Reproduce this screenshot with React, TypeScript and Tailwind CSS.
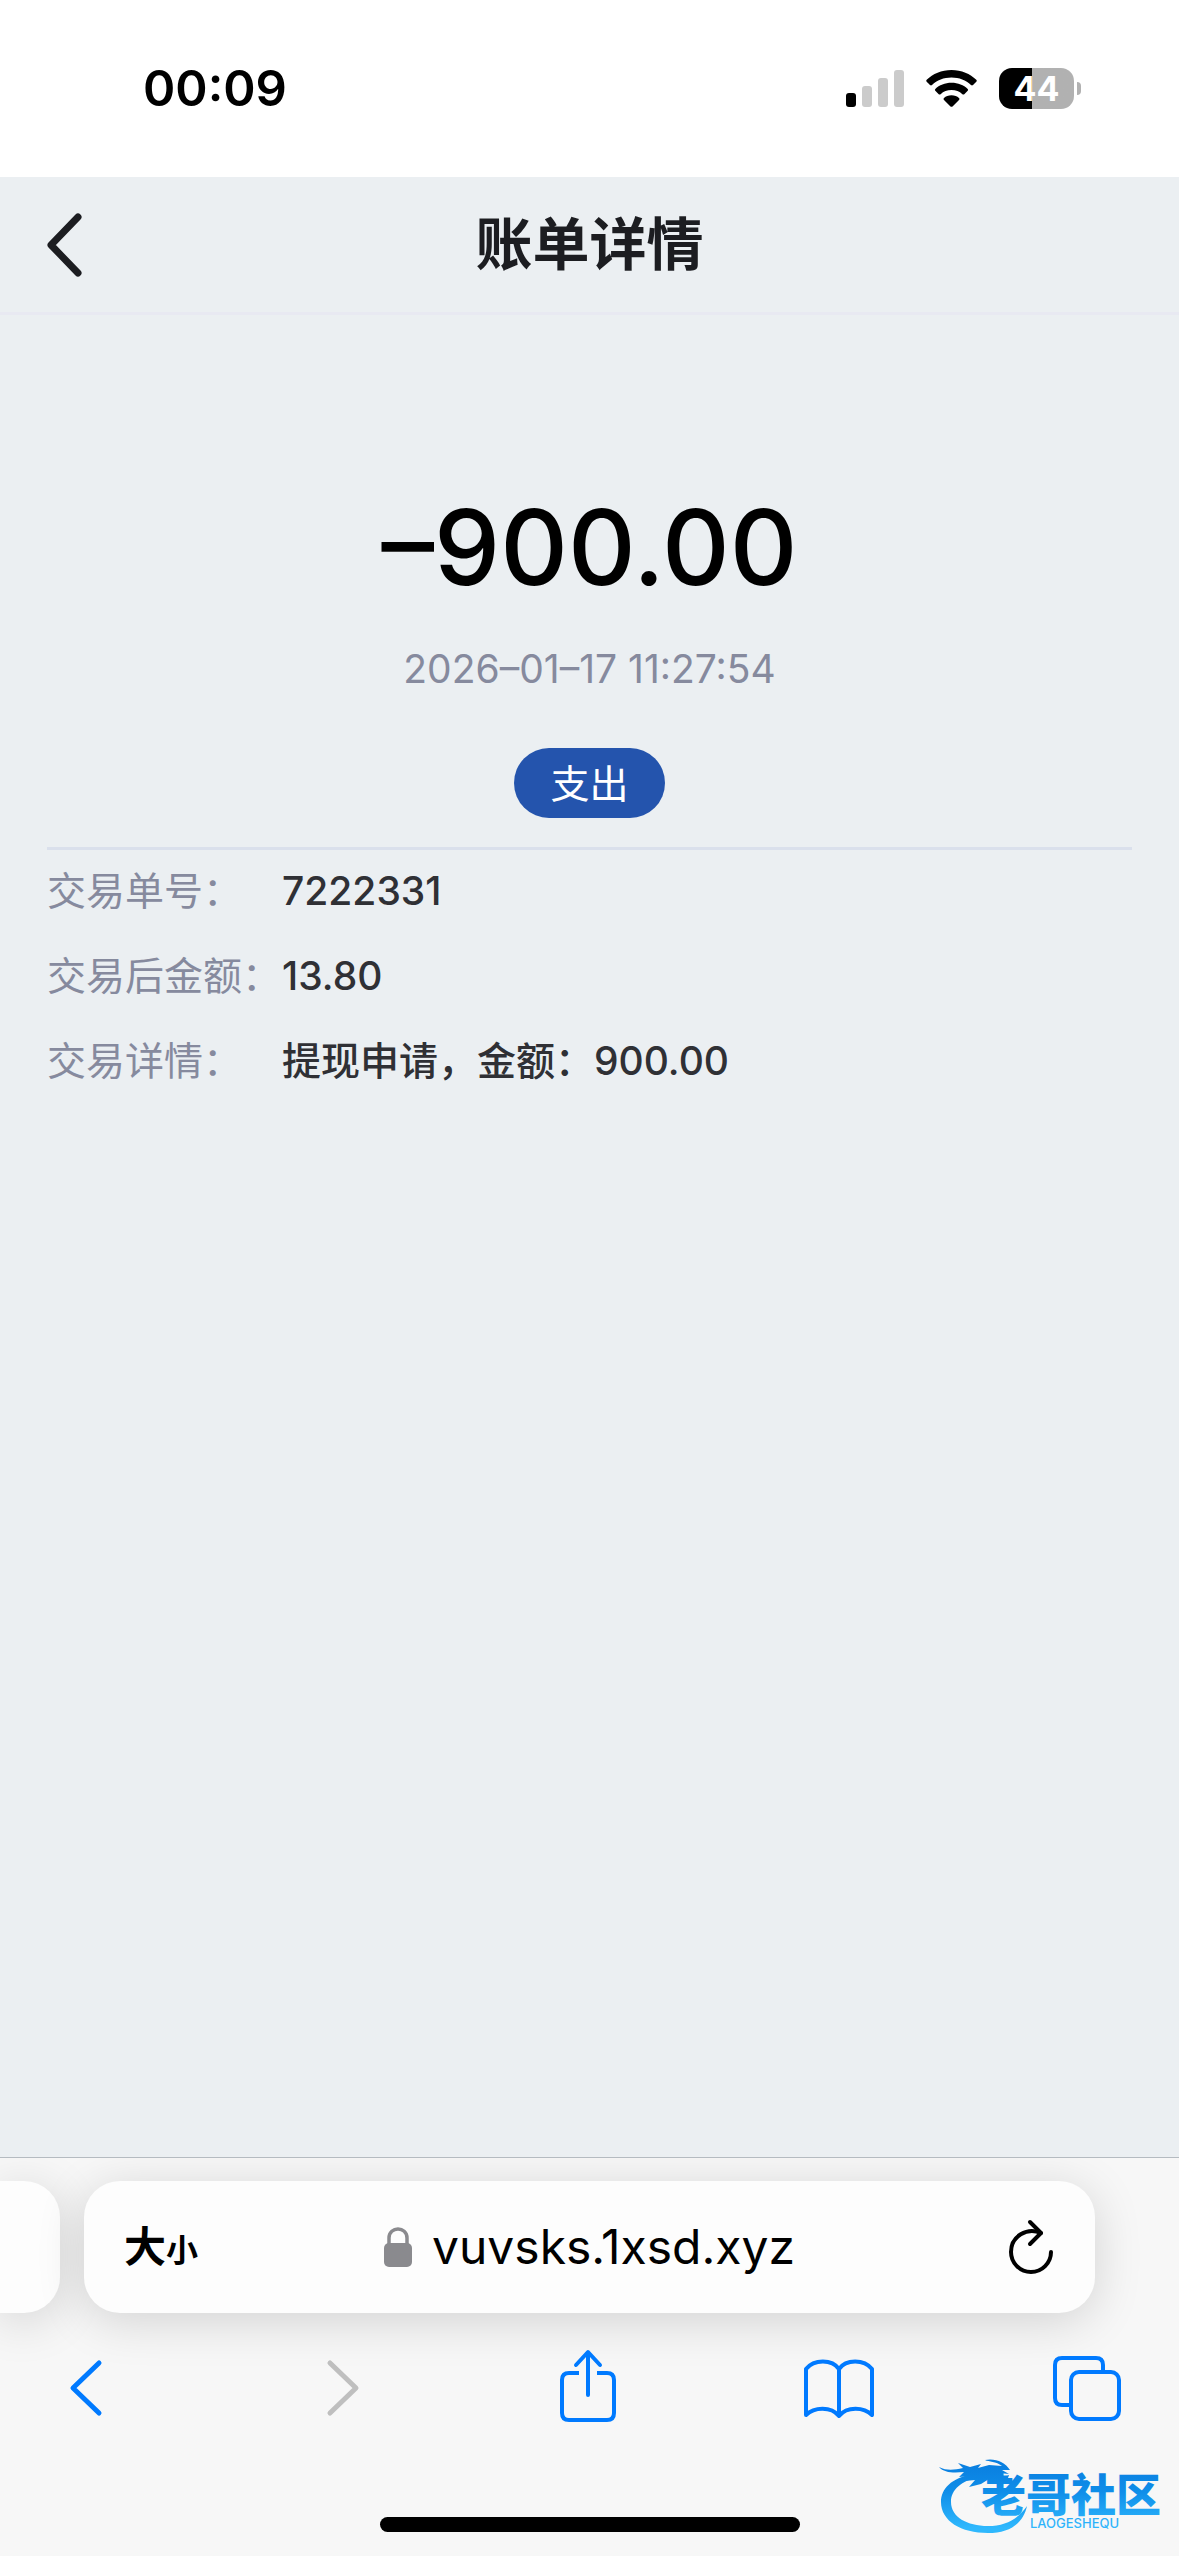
import React from "react";

const details = [
  { label: "交易单号：", value: "7222331" },
  { label: "交易后金额：", value: "13.80" },
  { label: "交易详情：", value: "提现申请，金额：900.00" },
];

function SignalIcon() {
  return (
    <svg className="h-[37px] w-[58px]" viewBox="0 0 58 37" aria-hidden="true">
      <rect x="0" y="23" width="10" height="14" rx="3" fill="#000" />
      <rect x="16" y="16" width="10" height="21" rx="3" fill="#cbcbcb" />
      <rect x="32" y="8" width="10" height="29" rx="3" fill="#cbcbcb" />
      <rect x="48" y="0" width="10" height="37" rx="3" fill="#cbcbcb" />
    </svg>
  );
}

function WifiIcon() {
  return (
    <svg className="h-[37px] w-[51px]" viewBox="0 0 51 37" aria-hidden="true">
      <path d="M25.500 0 C35.500 0 44.200 3.800 50.300 9.800 Q51.200 10.800 50.300 11.700 L47 15 Q46 15.900 45 15 C40 10.200 33.200 7.500 25.500 7.500 C17.800 7.500 11 10.200 6 15 Q5 15.900 4 15 L.7 11.700 Q-.2 10.800 .7 9.800 C6.800 3.800 15.500 0 25.500 0 Z" />
      <path d="M25.500 12.700 C32 12.700 37.700 15 41.700 18.900 Q42.600 19.900 41.700 20.800 L38.300 24.200 Q37.400 25 36.400 24.200 C33.500 21.500 29.800 20.100 25.500 20.100 C21.200 20.100 17.500 21.500 14.600 24.200 Q13.600 25 12.700 24.200 L9.300 20.800 Q8.400 19.900 9.300 18.900 C13.300 15 19 12.700 25.500 12.700 Z" />
      <path d="M25.500 25.300 C28.500 25.300 31.200 26.300 33 28 Q33.900 29 33 29.900 L26.500 36.400 Q25.500 37.300 24.500 36.400 L18 29.900 Q17.100 29 18 28 C19.800 26.300 22.500 25.300 25.500 25.300 Z" />
    </svg>
  );
}

function Battery() {
  return (
    <div className="flex items-center gap-[3px]">
      <div className="flex h-[41px] w-[75px] items-center justify-center rounded-[13px] bg-linear-to-r from-black from-44% to-[#b1b1b1] to-44% text-[34px] leading-none font-bold text-white">
        44
      </div>
      <div className="h-[13px] w-1 rounded-r-full bg-[#b1b1b1]" />
    </div>
  );
}

function StatusBar() {
  return (
    <div className="flex h-[177px] items-center justify-between bg-white pr-[98px] pl-[143px]">
      <span className="text-[49px] leading-none font-semibold">00:09</span>
      <div className="flex items-center gap-[22px]">
        <SignalIcon />
        <WifiIcon />
        <Battery />
      </div>
    </div>
  );
}

function Header() {
  return (
    <header className="grid h-[138px] grid-cols-[1fr_auto_1fr] items-center border-b-[3px] border-[#e8e9f2] px-[46px]">
      <button type="button" aria-label="返回" className="justify-self-start">
        <svg className="h-[64px] w-[37px]" viewBox="0 0 37 64" fill="none" stroke="#1c1d21" strokeWidth="7" strokeLinecap="round" strokeLinejoin="round">
          <path d="M32 4 L5 32 L32 60" />
        </svg>
      </button>
      <h1 className="text-[57px] leading-none font-semibold text-[#1c1d21]">账单详情</h1>
    </header>
  );
}

function AddressBar() {
  return (
    <div className="flex h-[132px] gap-6">
      <div className="w-[60px] rounded-r-[36px] bg-[#fdfdfd] shadow-[0_8px_48px_rgba(0,0,0,0.15)]" />
      <div className="mr-[84px] grid flex-1 grid-cols-[1fr_auto_1fr] items-center rounded-[36px] bg-[#fdfdfd] px-10 shadow-[0_8px_48px_rgba(0,0,0,0.15)]">
        <button type="button" className="flex items-baseline justify-self-start leading-none font-semibold">
          <span className="text-[42px]">大</span>
          <span className="text-[32px]">小</span>
        </button>
        <button type="button" className="flex items-center gap-[20px] text-[48px] leading-none">
          <svg className="h-[40px] w-[28px]" viewBox="0 0 28 40" aria-hidden="true">
            <path d="M5 18 V11 C5 -1 23 -1 23 11 V18" fill="none" stroke="#8a8a8e" strokeWidth="3.500" />
            <rect x="0" y="16" width="28" height="24" rx="5" fill="#8a8a8e" />
          </svg>
          vuvsks.1xsd.xyz
        </button>
        <button type="button" aria-label="重新载入" className="justify-self-end">
          <svg className="h-[56px] w-[48px]" viewBox="0 0 48 56" fill="none" stroke="#000" strokeWidth="4" strokeLinecap="round" strokeLinejoin="round">
            <path d="M34 14 C20 8 4 17 4 33 C4 44 13 53 24 53 C35 53 44 44 44 33" />
            <path d="M23 3 L34 14 L23 25" />
          </svg>
        </button>
      </div>
    </div>
  );
}

function Toolbar() {
  return (
    <nav className="flex items-center justify-between pr-[54px] pl-[51px]" aria-label="浏览器工具栏">
      <button type="button" aria-label="后退">
        <svg className="h-[76px] w-[72px]" viewBox="0 0 72 76" fill="none" stroke="#007aff" strokeWidth="5" strokeLinecap="round" strokeLinejoin="round">
          <path d="M48 14 L22 39 L48 64" />
        </svg>
      </button>
      <button type="button" aria-label="前进" disabled>
        <svg className="h-[76px] w-[72px]" viewBox="0 0 72 76" fill="none" stroke="#bfbfbf" strokeWidth="5" strokeLinecap="round" strokeLinejoin="round">
          <path d="M28 14 L54 39 L28 64" />
        </svg>
      </button>
      <button type="button" aria-label="分享">
        <svg className="h-[76px] w-[72px]" viewBox="0 0 72 76" fill="none" stroke="#007aff" strokeWidth="4" strokeLinecap="round" strokeLinejoin="round">
          <path d="M27 24 H17 Q10 24 10 31 V64 Q10 71 17 71 H55 Q62 71 62 64 V31 Q62 24 55 24 H45" strokeLinecap="butt" />
          <path d="M36 46 V4 M24 16 L36 3 L48 16" />
        </svg>
      </button>
      <button type="button" aria-label="书签">
        <svg className="h-[76px] w-[72px]" viewBox="0 0 72 76" fill="none" stroke="#007aff" strokeWidth="4" strokeLinecap="round" strokeLinejoin="round">
          <path d="M36 20 C29 10 11 10 3 20 V66 C11 58 28 57 36 67 C44 57 61 58 69 66 V20 C61 10 43 10 36 20 V67" />
        </svg>
      </button>
      <button type="button" aria-label="标签页">
        <svg className="h-[76px] w-[72px]" viewBox="0 0 72 76" fill="none" stroke="#007aff" strokeWidth="4" strokeLinejoin="round">
          <rect x="18" y="23" width="48" height="47" rx="8" />
          <path d="M50 23 V16 Q50 9 43 9 H9 Q2 9 2 16 V49 Q2 56 9 56 H18" />
        </svg>
      </button>
    </nav>
  );
}

function CommunityLogo() {
  return (
    <svg className="absolute right-4 bottom-5 h-[80px] w-[224px]" viewBox="0 0 224 80" role="img" aria-label="老哥社区">
      <defs>
        <linearGradient id="water" x1="0" y1="0" x2="0" y2="80" gradientUnits="userSpaceOnUse">
          <stop offset="0.1" stopColor="#0a7fe0" />
          <stop offset="0.45" stopColor="#0f8ee9" />
          <stop offset="0.9" stopColor="#2fb8fd" />
        </linearGradient>
      </defs>
      <g fill="url(#water)">
        <path d="M34 18 C12 22 2 33 2 46 C2 65 22 77 49 77 C70 77 84 68 88 50 C78 64 66 70 49 70 C28 70 12 61 12 46 C12 33 23 25 39 21 Z" />
        <path d="M0 11 C8 15 15 14 24 12 L19 7 L31 11 L42 8 L39 12 L50 9 L63 10 C57 5 50 6 46 4 C56 2 66 6 71 14 L63 14 L70 18 L60 17 C63 20 67 20 70 19 L68 25 L59 21 L54 27 L50 23 L42 28 L30 31 L36 24 L26 25 L32 20 L20 21 L25 16 C15 17 5 17 0 11 Z" />
        <text x="42" y="56" fontSize="45" fontWeight="900">老哥社区</text>
        <text x="91" y="72" fontSize="13" fontWeight="500">LAOGESHEQU</text>
      </g>
    </svg>
  );
}

export default function App() {
  return (
    <div className="flex min-h-screen flex-col bg-[#ebeff2] font-['Inter','Noto_Sans_CJK_SC',sans-serif] text-black">
      <StatusBar />
      <Header />
      <main className="flex-1 px-[47px] pt-[182px]">
        <section className="flex flex-col items-center border-b-[3px] border-[#dae0ec] pb-[29px]">
          <p className="text-[105px] leading-[100px] font-medium">–900.00</p>
          <p className="mt-[47px] text-[39px] leading-[50px] text-[#868a9e]">2026–01–17 11:27:54</p>
          <span className="mt-[54px] flex h-[70px] items-center rounded-full bg-[#2454ad] px-9 text-[39px] leading-none text-white">
            支出
          </span>
        </section>
        <dl className="flex flex-col gap-1 text-[39px] leading-[81px]">
          {details.map((item) => (
            <div key={item.label} className="flex">
              <dt className="w-[235px] shrink-0 text-[#868a9e]">{item.label}</dt>
              <dd className="font-medium text-[#2f3035]">{item.value}</dd>
            </div>
          ))}
        </dl>
      </main>
      <footer className="relative overflow-hidden border-t border-[#b5bbc1] bg-[#f7f7f7] pt-[23px] pb-6">
        <AddressBar />
        <div className="mt-[36px]">
          <Toolbar />
        </div>
        <div className="mx-auto mt-[92px] h-[15px] w-[420px] rounded-full bg-black" />
        <CommunityLogo />
      </footer>
    </div>
  );
}
